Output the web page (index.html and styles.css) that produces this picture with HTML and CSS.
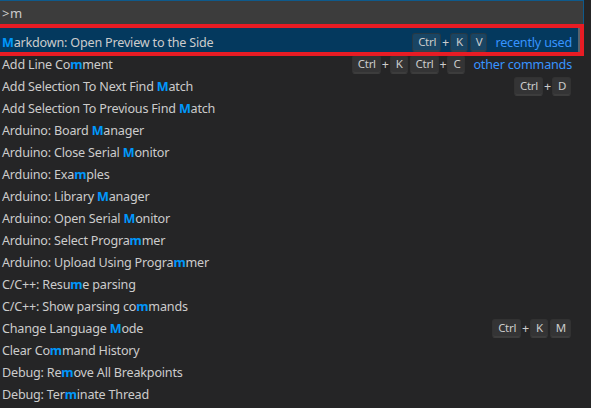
FILE: index.html
```html
<!DOCTYPE html>
<html>
<head>
<meta charset="utf-8">
<link rel="stylesheet" href="styles.css">
</head>
<body>
<div class="widget">
  <div class="input-box"><span class="input-text">&gt;m</span></div>
  <div class="list">
    <div class="row selected">
      <span class="label"><b>M</b>arkdown: Open Preview to the Side</span>
      <span class="keys"><kbd>Ctrl</kbd><span class="plus">+</span><kbd>K</kbd><kbd>V</kbd></span>
      <span class="desc">recently used</span>
    </div>
    <div class="row">
      <span class="label">Add Line Co<b>m</b>ment</span>
      <span class="keys"><kbd>Ctrl</kbd><span class="plus">+</span><kbd>K</kbd><kbd>Ctrl</kbd><span class="plus">+</span><kbd>C</kbd></span>
      <span class="desc">other commands</span>
    </div>
    <div class="row">
      <span class="label">Add Selection To Next Find <b>M</b>atch</span>
      <span class="keys"><kbd>Ctrl</kbd><span class="plus">+</span><kbd>D</kbd></span>
    </div>
    <div class="row"><span class="label">Add Selection To Previous Find <b>M</b>atch</span></div>
    <div class="row"><span class="label">Arduino: Board <b>M</b>anager</span></div>
    <div class="row"><span class="label">Arduino: Close Serial <b>M</b>onitor</span></div>
    <div class="row"><span class="label">Arduino: Exa<b>m</b>ples</span></div>
    <div class="row"><span class="label">Arduino: Library <b>M</b>anager</span></div>
    <div class="row"><span class="label">Arduino: Open Serial <b>M</b>onitor</span></div>
    <div class="row"><span class="label">Arduino: Select Progra<b>m</b>mer</span></div>
    <div class="row"><span class="label">Arduino: Upload Using Progra<b>m</b>mer</span></div>
    <div class="row"><span class="label">C/C++: Resu<b>m</b>e parsing</span></div>
    <div class="row"><span class="label">C/C++: Show parsing co<b>m</b>mands</span></div>
    <div class="row">
      <span class="label">Change Language <b>M</b>ode</span>
      <span class="keys"><kbd>Ctrl</kbd><span class="plus">+</span><kbd>K</kbd><kbd>M</kbd></span>
    </div>
    <div class="row"><span class="label">Clear Co<b>m</b>mand History</span></div>
    <div class="row"><span class="label">Debug: Re<b>m</b>ove All Breakpoints</span></div>
    <div class="row"><span class="label">Debug: Ter<b>m</b>inate Thread</span></div>
  </div>
  <div class="slider"></div>
  <div class="annotation"></div>
</div>
</body>
</html>
```
FILE: styles.css
```css
html, body {
  margin: 0;
  padding: 0;
  background: #252526;
  overflow: hidden;
}
body {
  font-family: "Noto Sans", "Open Sans", sans-serif;
  font-size: 12.6px;
  letter-spacing: -0.2px;
  color: #cccccc;
}
.widget {
  position: relative;
  width: 584px;
}
.input-box {
  height: 24px;
  box-sizing: border-box;
  background: #3c3c3c;
  border-top: 1px solid #0e5a8c;
  border-right: 1px solid #0e5a8c;
  display: flex;
  align-items: center;
  padding-left: 2px;
}
.input-text {
  color: #cccccc;
  font-size: 13px;
  letter-spacing: 0.5px;
}
.list {
  margin-top: 7px;
}
.row {
  height: 22px;
  display: flex;
  align-items: center;
  padding: 0 12px 0 2px;
  white-space: nowrap;
}
.row.selected {
  background: #04395e;
  box-shadow: 0 -3px 0 #04395e;
}
.label {
  flex: 1;
}
.label b {
  color: #0097fb;
  font-weight: bold;
}
.keys {
  display: flex;
  align-items: center;
}
kbd {
  font-family: "Noto Sans", "Open Sans", sans-serif;
  font-size: 11.5px;
  letter-spacing: -0.3px;
  line-height: 12px;
  color: #cccccc;
  background: rgba(128, 128, 128, 0.17);
  border: 1px solid rgba(51, 51, 51, 0.6);
  border-bottom-color: rgba(68, 68, 68, 0.6);
  box-shadow: inset 0 -1px 0 rgba(68, 68, 68, 0.6);
  border-radius: 3px;
  padding: 2px 4px 3px 5px;
  margin: 0 1px;
}
.plus {
  margin: 0;
  font-size: 12.5px;
}
.desc {
  color: #3794ff;
  margin-left: 7px;
}
.slider {
  position: absolute;
  left: 578px;
  top: 28px;
  width: 2px;
  height: 24px;
  background: #56636e;
}
.annotation {
  position: absolute;
  left: -4px;
  top: 24px;
  width: 580px;
  height: 24px;
  border: 4px solid #e81c24;
}
```
